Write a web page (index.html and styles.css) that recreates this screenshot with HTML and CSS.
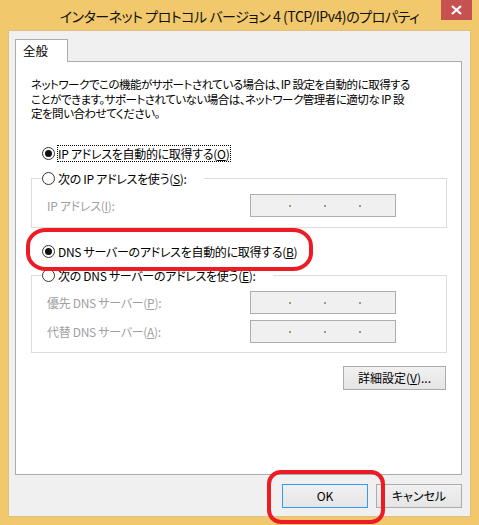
FILE: index.html
```html
<!DOCTYPE html>
<html lang="ja">
<head>
<meta charset="utf-8">
<link rel="stylesheet" href="styles.css">
</head>
<body>
<div class="window">
  <div class="titlebar">
    <span class="title">インターネット プロトコル バージョン 4 (TCP/IPv4)のプロパティ</span>
    <div class="close"><svg width="11" height="10" viewBox="0 0 11 10"><path d="M1 1 L10 9 M10 1 L1 9" stroke="#fff" stroke-width="2.2" fill="none"/></svg></div>
  </div>
  <div class="client">
    <div class="tabs"><div class="tab">全般</div></div>
    <div class="panel">
      <p class="desc">ネットワークでこの機能がサポートされている場合は、IP 設定を自動的に取得する<br>ことができます。サポートされていない場合は、ネットワーク管理者に適切な IP 設<br>定を問い合わせてください。</p>
      <div class="radio-row first">
        <span class="radio checked"></span>
        <span class="rlabel focus">IP アドレスを自動的に取得する(<u>O</u>)</span>
      </div>
      <div class="group g1">
        <div class="legend">
          <span class="radio"></span>
          <span class="rlabel">次の IP アドレスを使う(<u>S</u>):</span>
        </div>
        <div class="field-row">
          <span class="flabel">IP アドレス(<u>I</u>):</span>
          <div class="ipbox"><i></i><i></i><i></i></div>
        </div>
      </div>
      <div class="radio-row dns">
        <span class="radio checked"></span>
        <span class="rlabel">DNS サーバーのアドレスを自動的に取得する(<u>B</u>)</span>
      </div>
      <div class="group g2">
        <div class="legend">
          <span class="radio"></span>
          <span class="rlabel">次の DNS サーバーのアドレスを使う(<u>E</u>):</span>
        </div>
        <div class="field-row">
          <span class="flabel">優先 DNS サーバー(<u>P</u>):</span>
          <div class="ipbox"><i></i><i></i><i></i></div>
        </div>
        <div class="field-row second">
          <span class="flabel">代替 DNS サーバー(<u>A</u>):</span>
          <div class="ipbox"><i></i><i></i><i></i></div>
        </div>
      </div>
      <div class="adv-row"><button class="btn adv">詳細設定(<u>V</u>)...</button></div>
    </div>
    <div class="buttons">
      <button class="btn ok">OK</button>
      <button class="btn cancel">キャンセル</button>
    </div>
  </div>
  <div class="mark mark-dns"></div>
  <div class="mark mark-ok"></div>
</div>
</body>
</html>
```
FILE: styles.css
```css
* { box-sizing: border-box; }
html, body { margin: 0; padding: 0; }
body {
  width: 479px;
  height: 525px;
  overflow: hidden;
  font-family: "Noto Sans CJK JP", "Noto Sans", sans-serif;
  font-size: 12px;
  font-feature-settings: "palt";
  color: #000;
}
.window {
  position: relative;
  width: 479px;
  height: 525px;
  background: #f1c86b;
  padding: 0 8px 8px 8px;
  display: flex;
  flex-direction: column;
}
.titlebar {
  height: 30px;
  display: flex;
  align-items: center;
  justify-content: center;
  position: relative;
}
.title {
  font-size: 14px;
  letter-spacing: -0.45px;
  color: #111;
  margin-left: 0;
  margin-top: 2px;
  line-height: 20px;
  white-space: nowrap;
}
.close {
  position: absolute;
  top: 0;
  right: -1px;
  width: 31px;
  height: 20px;
  background: #c75050;
  display: flex;
  align-items: center;
  justify-content: center;
}
.client {
  flex: 1;
  background: #f0f0f0;
  border: 1px solid #dcc084;
  padding: 8px 8px 0 6px;
  display: flex;
  flex-direction: column;
}
.tabs {
  display: flex;
  height: 22px;
  position: relative;
  z-index: 1;
}
.tab {
  width: 53px;
  height: 23px;
  background: #fff;
  border: 1px solid #acacac;
  border-bottom: none;
  padding: 3px 0 0 7px;
  line-height: 16px;
  font-size: 12.5px;
}
.panel {
  height: 414px;
  background: #fff;
  border: 1px solid #acacac;
  padding: 0 14px 0 15px;
  display: flex;
  flex-direction: column;
}
.desc {
  margin: 15px 0 0 0;
  font-size: 11.5px;
  letter-spacing: -0.5px;
  line-height: 14.5px;
  white-space: nowrap;
}
.radio-row {
  display: flex;
  align-items: center;
  height: 17px;
  padding-left: 11px;
}
.radio-row.first { margin-top: 24px; }
.radio-row.dns { margin-top: 15px; }
.radio {
  width: 13px;
  height: 13px;
  border-radius: 50%;
  border: 1px solid #333;
  background: #fff;
  display: flex;
  align-items: center;
  justify-content: center;
  flex: none;
}
.radio.checked::after {
  content: "";
  width: 7px;
  height: 7px;
  border-radius: 50%;
  background: #111;
}
.rlabel {
  margin-left: 2px;
  line-height: 15px;
  padding: 0 1px 0 0;
  letter-spacing: -0.3px;
  border: 1px solid transparent;
  white-space: nowrap;
}
.rlabel.focus { border: 1px dotted #000; }
.group {
  border: 1px solid #dcdcdc;
  display: flex;
  flex-direction: column;
}
.g1 { margin-top: 16px; padding-bottom: 10px; }
.g2 { margin-top: 15px; padding-bottom: 9px; }
.legend {
  display: flex;
  align-items: center;
  width: fit-content;
  height: 17px;
  margin: -9px 0 0 10px;
  padding-right: 15px;
  background: #fff;
}
.g1 .field-row { margin-top: 7px; }
.g2 .field-row { margin-top: 7px; }
.g2 .field-row.second { margin-top: 6px; }
.field-row {
  display: flex;
  align-items: center;
  padding-left: 15px;
}
.flabel {
  width: 203px;
  color: #a0a0a0;
  letter-spacing: -0.3px;
  white-space: nowrap;
}
.flabel u { text-decoration-color: #a0a0a0; }
.ipbox {
  width: 146px;
  height: 23px;
  border: 1px solid #adadad;
  background: #f0f0f0;
  display: flex;
  align-items: center;
  padding: 2px 0 0 38px;
  gap: 33px;
}
.ipbox i {
  width: 2px;
  height: 2px;
  background: #a8957a;
}
.adv-row {
  display: flex;
  justify-content: flex-end;
  margin-top: 13px;
  padding-right: 1px;
}
.btn {
  font-family: inherit;
  font-size: 12px;
  font-feature-settings: "palt";
  color: #000;
  height: 24px;
  border: 1px solid #acacac;
  background: linear-gradient(#f0f0f0, #e5e5e5);
  padding: 0;
  line-height: 20px;
}
.adv { width: 103px; }
.buttons {
  display: flex;
  justify-content: flex-end;
  gap: 8px;
  margin-top: 9px;
  padding-right: 0;
}
.ok { width: 86px; border-color: #3399ff; }
.cancel { width: 86px; }
.mark {
  position: absolute;
  border: 4px solid #ed1c24;
  pointer-events: none;
}
.mark-dns {
  left: 26px;
  top: 228px;
  width: 287px;
  height: 43px;
  border-radius: 20px / 18px;
}
.mark-ok {
  left: 267px;
  top: 470px;
  width: 118px;
  height: 54px;
  border-radius: 14px;
}
```
